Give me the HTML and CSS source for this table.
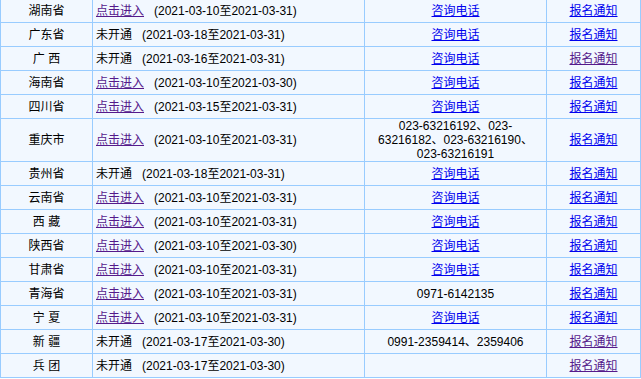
FILE: index.html
```html
<!DOCTYPE html>
<html lang="zh-CN">
<head>
<meta charset="utf-8">
<title>报名</title>
<link rel="stylesheet" href="styles.css">
</head>
<body>
<table class="grid">
  <colgroup><col class="c1"><col class="c2"><col class="c3"><col class="c4"></colgroup>
  <tbody>
    <tr><td class="p">湖南省</td><td class="s"><a class="v" href="#">点击进入</a><span class="d">(2021-03-10至2021-03-31)</span></td><td class="m"><a href="#">咨询电话</a></td><td class="m"><a href="#">报名通知</a></td></tr>
    <tr><td class="p">广东省</td><td class="s">未开通<span class="d">(2021-03-18至2021-03-31)</span></td><td class="m"><a href="#">咨询电话</a></td><td class="m"><a href="#">报名通知</a></td></tr>
    <tr><td class="p">广 西</td><td class="s">未开通<span class="d">(2021-03-16至2021-03-31)</span></td><td class="m"><a href="#">咨询电话</a></td><td class="m"><a class="v" href="#">报名通知</a></td></tr>
    <tr><td class="p">海南省</td><td class="s"><a class="v" href="#">点击进入</a><span class="d">(2021-03-10至2021-03-30)</span></td><td class="m"><a href="#">咨询电话</a></td><td class="m"><a href="#">报名通知</a></td></tr>
    <tr><td class="p">四川省</td><td class="s"><a class="v" href="#">点击进入</a><span class="d">(2021-03-15至2021-03-31)</span></td><td class="m"><a href="#">咨询电话</a></td><td class="m"><a href="#">报名通知</a></td></tr>
    <tr><td class="p">重庆市</td><td class="s"><a class="v" href="#">点击进入</a><span class="d">(2021-03-10至2021-03-31)</span></td><td class="m">023-63216192、023-63216182、023-63216190、023-63216191</td><td class="m"><a href="#">报名通知</a></td></tr>
    <tr><td class="p">贵州省</td><td class="s">未开通<span class="d">(2021-03-18至2021-03-31)</span></td><td class="m"><a href="#">咨询电话</a></td><td class="m"><a href="#">报名通知</a></td></tr>
    <tr><td class="p">云南省</td><td class="s"><a class="v" href="#">点击进入</a><span class="d">(2021-03-10至2021-03-31)</span></td><td class="m"><a href="#">咨询电话</a></td><td class="m"><a href="#">报名通知</a></td></tr>
    <tr><td class="p">西 藏</td><td class="s"><a class="v" href="#">点击进入</a><span class="d">(2021-03-10至2021-03-31)</span></td><td class="m"><a href="#">咨询电话</a></td><td class="m"><a href="#">报名通知</a></td></tr>
    <tr><td class="p">陕西省</td><td class="s"><a class="v" href="#">点击进入</a><span class="d">(2021-03-10至2021-03-30)</span></td><td class="m"><a href="#">咨询电话</a></td><td class="m"><a href="#">报名通知</a></td></tr>
    <tr><td class="p">甘肃省</td><td class="s"><a class="v" href="#">点击进入</a><span class="d">(2021-03-10至2021-03-31)</span></td><td class="m"><a href="#">咨询电话</a></td><td class="m"><a href="#">报名通知</a></td></tr>
    <tr><td class="p">青海省</td><td class="s"><a class="v" href="#">点击进入</a><span class="d">(2021-03-10至2021-03-31)</span></td><td class="m">0971-6142135</td><td class="m"><a href="#">报名通知</a></td></tr>
    <tr><td class="p">宁 夏</td><td class="s"><a class="v" href="#">点击进入</a><span class="d">(2021-03-10至2021-03-31)</span></td><td class="m"><a href="#">咨询电话</a></td><td class="m"><a href="#">报名通知</a></td></tr>
    <tr><td class="p">新 疆</td><td class="s">未开通<span class="d">(2021-03-17至2021-03-30)</span></td><td class="m">0991-2359414、2359406</td><td class="m"><a class="v" href="#">报名通知</a></td></tr>
    <tr><td class="p">兵 团</td><td class="s">未开通<span class="d">(2021-03-17至2021-03-30)</span></td><td class="m"></td><td class="m"><a class="v" href="#">报名通知</a></td></tr>
  </tbody>
</table>
</body>
</html>
```

FILE: styles.css
```css
html, body {
  margin: 0;
  padding: 0;
  background: #ffffff;
}
body {
  font-family: "Liberation Sans", "Noto Sans CJK SC", sans-serif;
  font-size: 12px;
  color: #000;
}
.grid {
  border-collapse: collapse;
  table-layout: fixed;
  width: 640px;
  margin-top: -2px;
  background: #f2f8ff;
}
.c1 { width: 92px; }
.c2 { width: 272px; }
.c3 { width: 182px; }
.c4 { width: 94px; }
.grid td {
  border: 1px solid #99ccff;
  height: 23px;
  padding: 0 3px;
  line-height: 14px;
  vertical-align: middle;
}
.grid td.p { text-align: center; }
.grid td.s { text-align: left; }
.grid td.m { text-align: center; }
.grid a {
  color: #0000ee;
  text-decoration: underline;
}
.grid a.v { color: #551a8b; }
.d { margin-left: 10px; }
```
